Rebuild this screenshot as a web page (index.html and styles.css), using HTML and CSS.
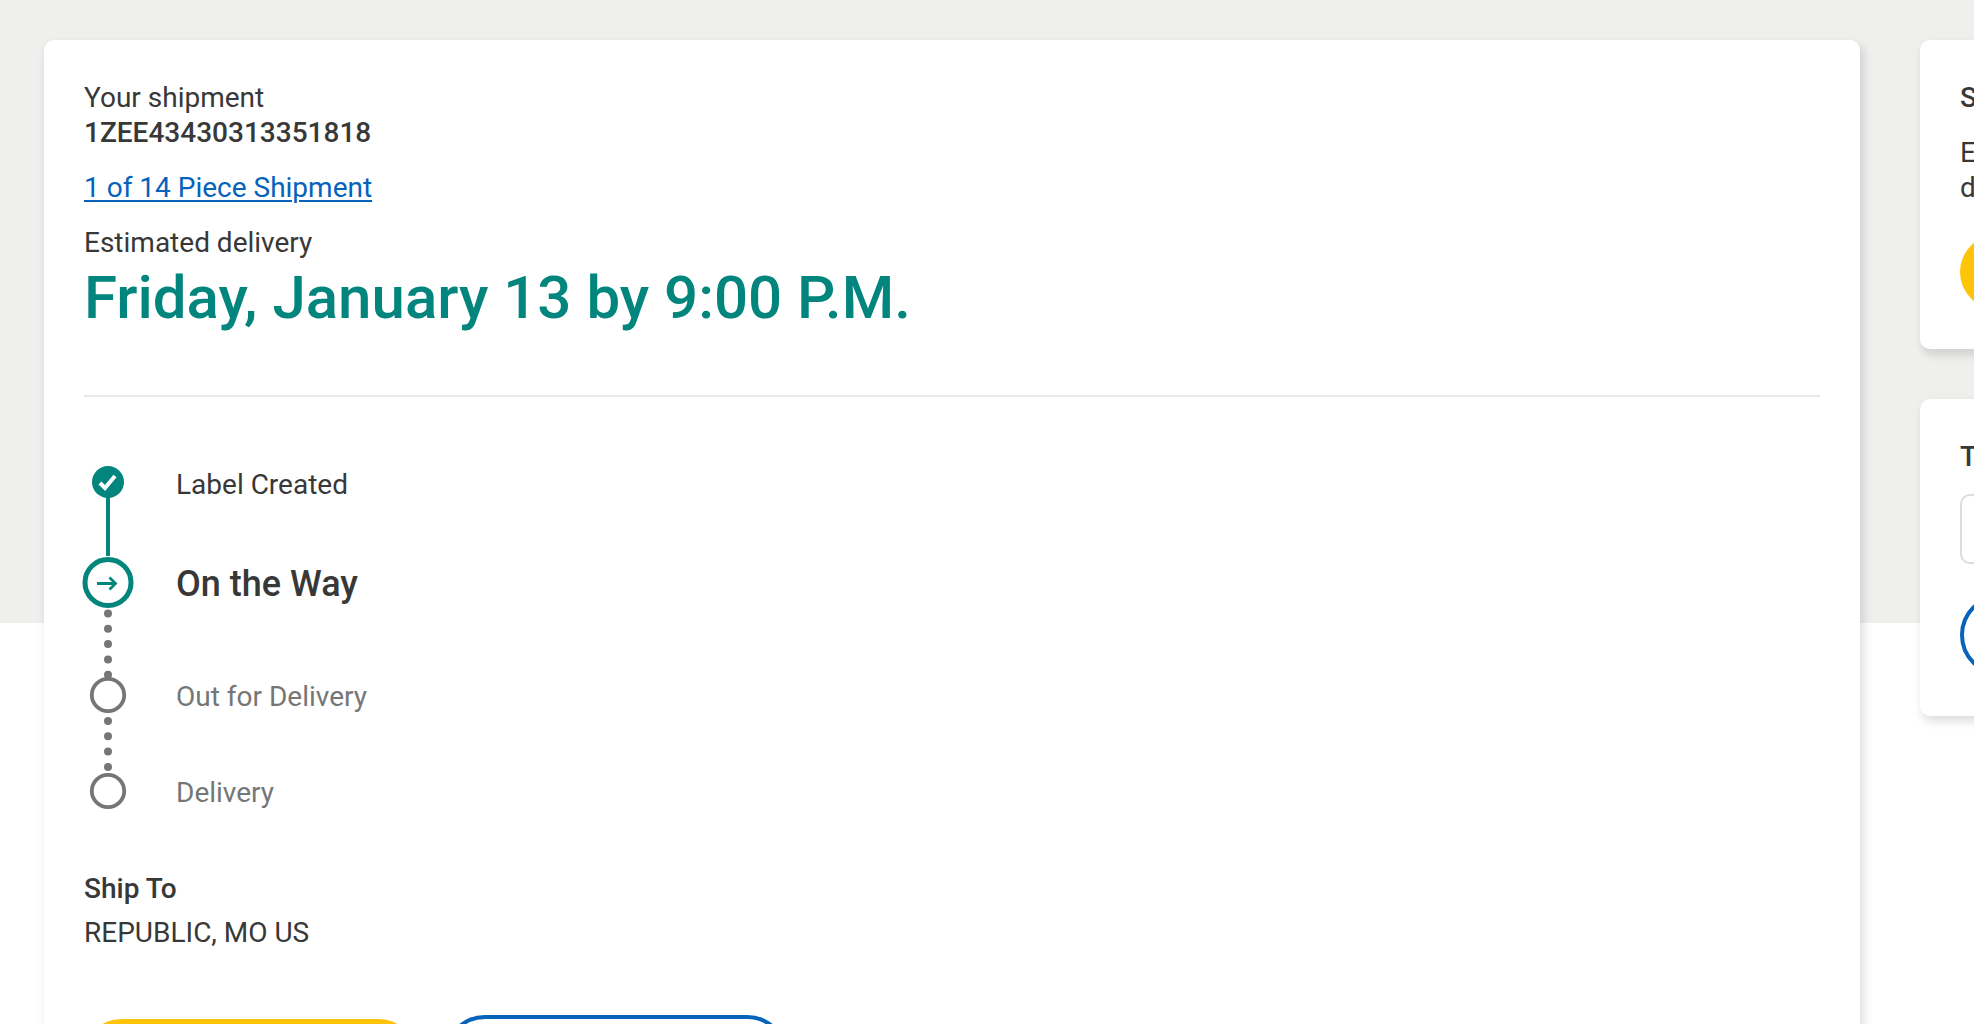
FILE: index.html
```html
<!DOCTYPE html>
<html lang="en">
<head>
<meta charset="utf-8">
<meta name="viewport" content="width=device-width, initial-scale=1">
<title>Shipment tracking</title>
<link rel="stylesheet" href="styles.css">
</head>
<body>
<div class="page">
  <main class="card shipment">
    <header class="summary">
      <p>Your shipment</p>
      <p class="strong">1ZEE43430313351818</p>
      <p class="pieces"><a href="#pieces">1 of 14 Piece Shipment</a></p>
      <p>Estimated delivery</p>
      <h1 class="eta">Friday, January 13 by 9:00 P.M.</h1>
    </header>
    <div class="progress">
      <svg class="track" width="52" height="352" viewBox="0 0 52 352" aria-hidden="true">
        <path d="M26 32V98" stroke="#02857c" stroke-width="4"/>
        <circle cx="26" cy="24" r="16" fill="#02857c"/>
        <path d="M18 25l5 5 10-12" fill="none" stroke="#fff" stroke-width="4"/>
        <circle cx="26" cy="124.500" r="23" fill="none" stroke="#02857c" stroke-width="5"/>
        <path d="M15 125.500h18M27.500 119.500l6 6-6 6" fill="none" stroke="#02857c" stroke-width="2.800"/>
        <path d="M26 155.500V218M26 263V310" stroke="#757777" stroke-width="8" stroke-linecap="round" stroke-dasharray="0 15.300"/>
        <circle cx="26" cy="237" r="16.200" fill="#fff" stroke="#757777" stroke-width="3.800"/>
        <circle cx="26" cy="333" r="16.200" fill="#fff" stroke="#757777" stroke-width="3.800"/>
      </svg>
      <ol class="steps">
        <li>Label Created</li>
        <li class="current">On the Way</li>
        <li class="pending">Out for Delivery</li>
        <li class="pending">Delivery</li>
      </ol>
    </div>
    <section class="ship-to">
      <h2>Ship To</h2>
      <p>REPUBLIC, MO US</p>
    </section>
    <div class="actions">
      <button class="button primary" type="button" aria-label="Primary action"></button>
      <button class="button outline" type="button" aria-label="Secondary action"></button>
    </div>
  </main>
  <aside class="side">
    <section class="card side-card">
      <h2>S</h2>
      <p class="notice">E<br>d</p>
      <button class="button primary" type="button" aria-label="Sign up"></button>
    </section>
    <section class="card side-card">
      <h2><label for="track">T</label></h2>
      <input class="field" id="track" type="text">
      <button class="button outline" type="button" aria-label="Track"></button>
    </section>
  </aside>
</div>
</body>
</html>
```
FILE: styles.css
```css
* {
  box-sizing: border-box;
  margin: 0;
  padding: 0;
}

html {
  scrollbar-width: none;
}

body {
  background: #fff linear-gradient(#efefed, #efefed) no-repeat 0 0 / 100% 623px;
  color: #383838;
  font: 400 28px/35px Roboto, "Liberation Sans", sans-serif;
  overflow-x: hidden;
}

.page {
  display: grid;
  grid-template-columns: minmax(0, 1fr) 54px;
  gap: 60px;
  align-items: start;
  padding: 40px 0 40px 44px;
}

.card {
  background: #fff;
  border-radius: 10px;
  box-shadow: 3px 5px 8px 1px rgba(30, 45, 40, 0.14);
  padding: 40px;
}

h2,
.strong {
  font-size: 28px;
  font-weight: 500;
}

.summary {
  border-bottom: 2px solid #e8e8e8;
  padding-bottom: 60px;
}

.pieces {
  margin: 20px 0;
}

a {
  color: #0662bb;
  text-underline-offset: 3px;
  text-decoration-thickness: 2px;
}

.eta {
  color: #02857c;
  font-size: 60px;
  font-weight: 500;
  line-height: 75px;
}

.progress {
  display: flex;
  gap: 42px;
  margin: 61px 0 21px -2px;
}

.track {
  flex: none;
}

.steps {
  display: grid;
  grid-template-rows: 52px 148px 76px 116px;
  align-items: center;
  list-style: none;
}

.current {
  font-size: 36px;
  font-weight: 500;
}

.pending {
  color: #757777;
}

.ship-to {
  display: grid;
  gap: 9px;
}

.actions {
  display: flex;
  align-items: center;
  gap: 28px;
  margin-top: 65px;
}

.button {
  border: 0;
  border-radius: 41px;
  width: 332px;
  height: 74px;
}

.primary {
  background: #ffc40a;
}

.outline {
  background: #fff;
  border: 4px solid #0662bb;
  width: 344px;
  height: 82px;
}

.side {
  display: grid;
  gap: 50px;
}

.side-card {
  width: 480px;
}

.notice {
  margin: 20px 0 30px;
}

.side-card .button {
  display: block;
}

.field {
  display: block;
  border: 2px solid #ddd;
  border-radius: 10px;
  width: 100%;
  height: 70px;
  margin: 20px 0 30px;
  padding: 0 20px;
  font: inherit;
}
```
